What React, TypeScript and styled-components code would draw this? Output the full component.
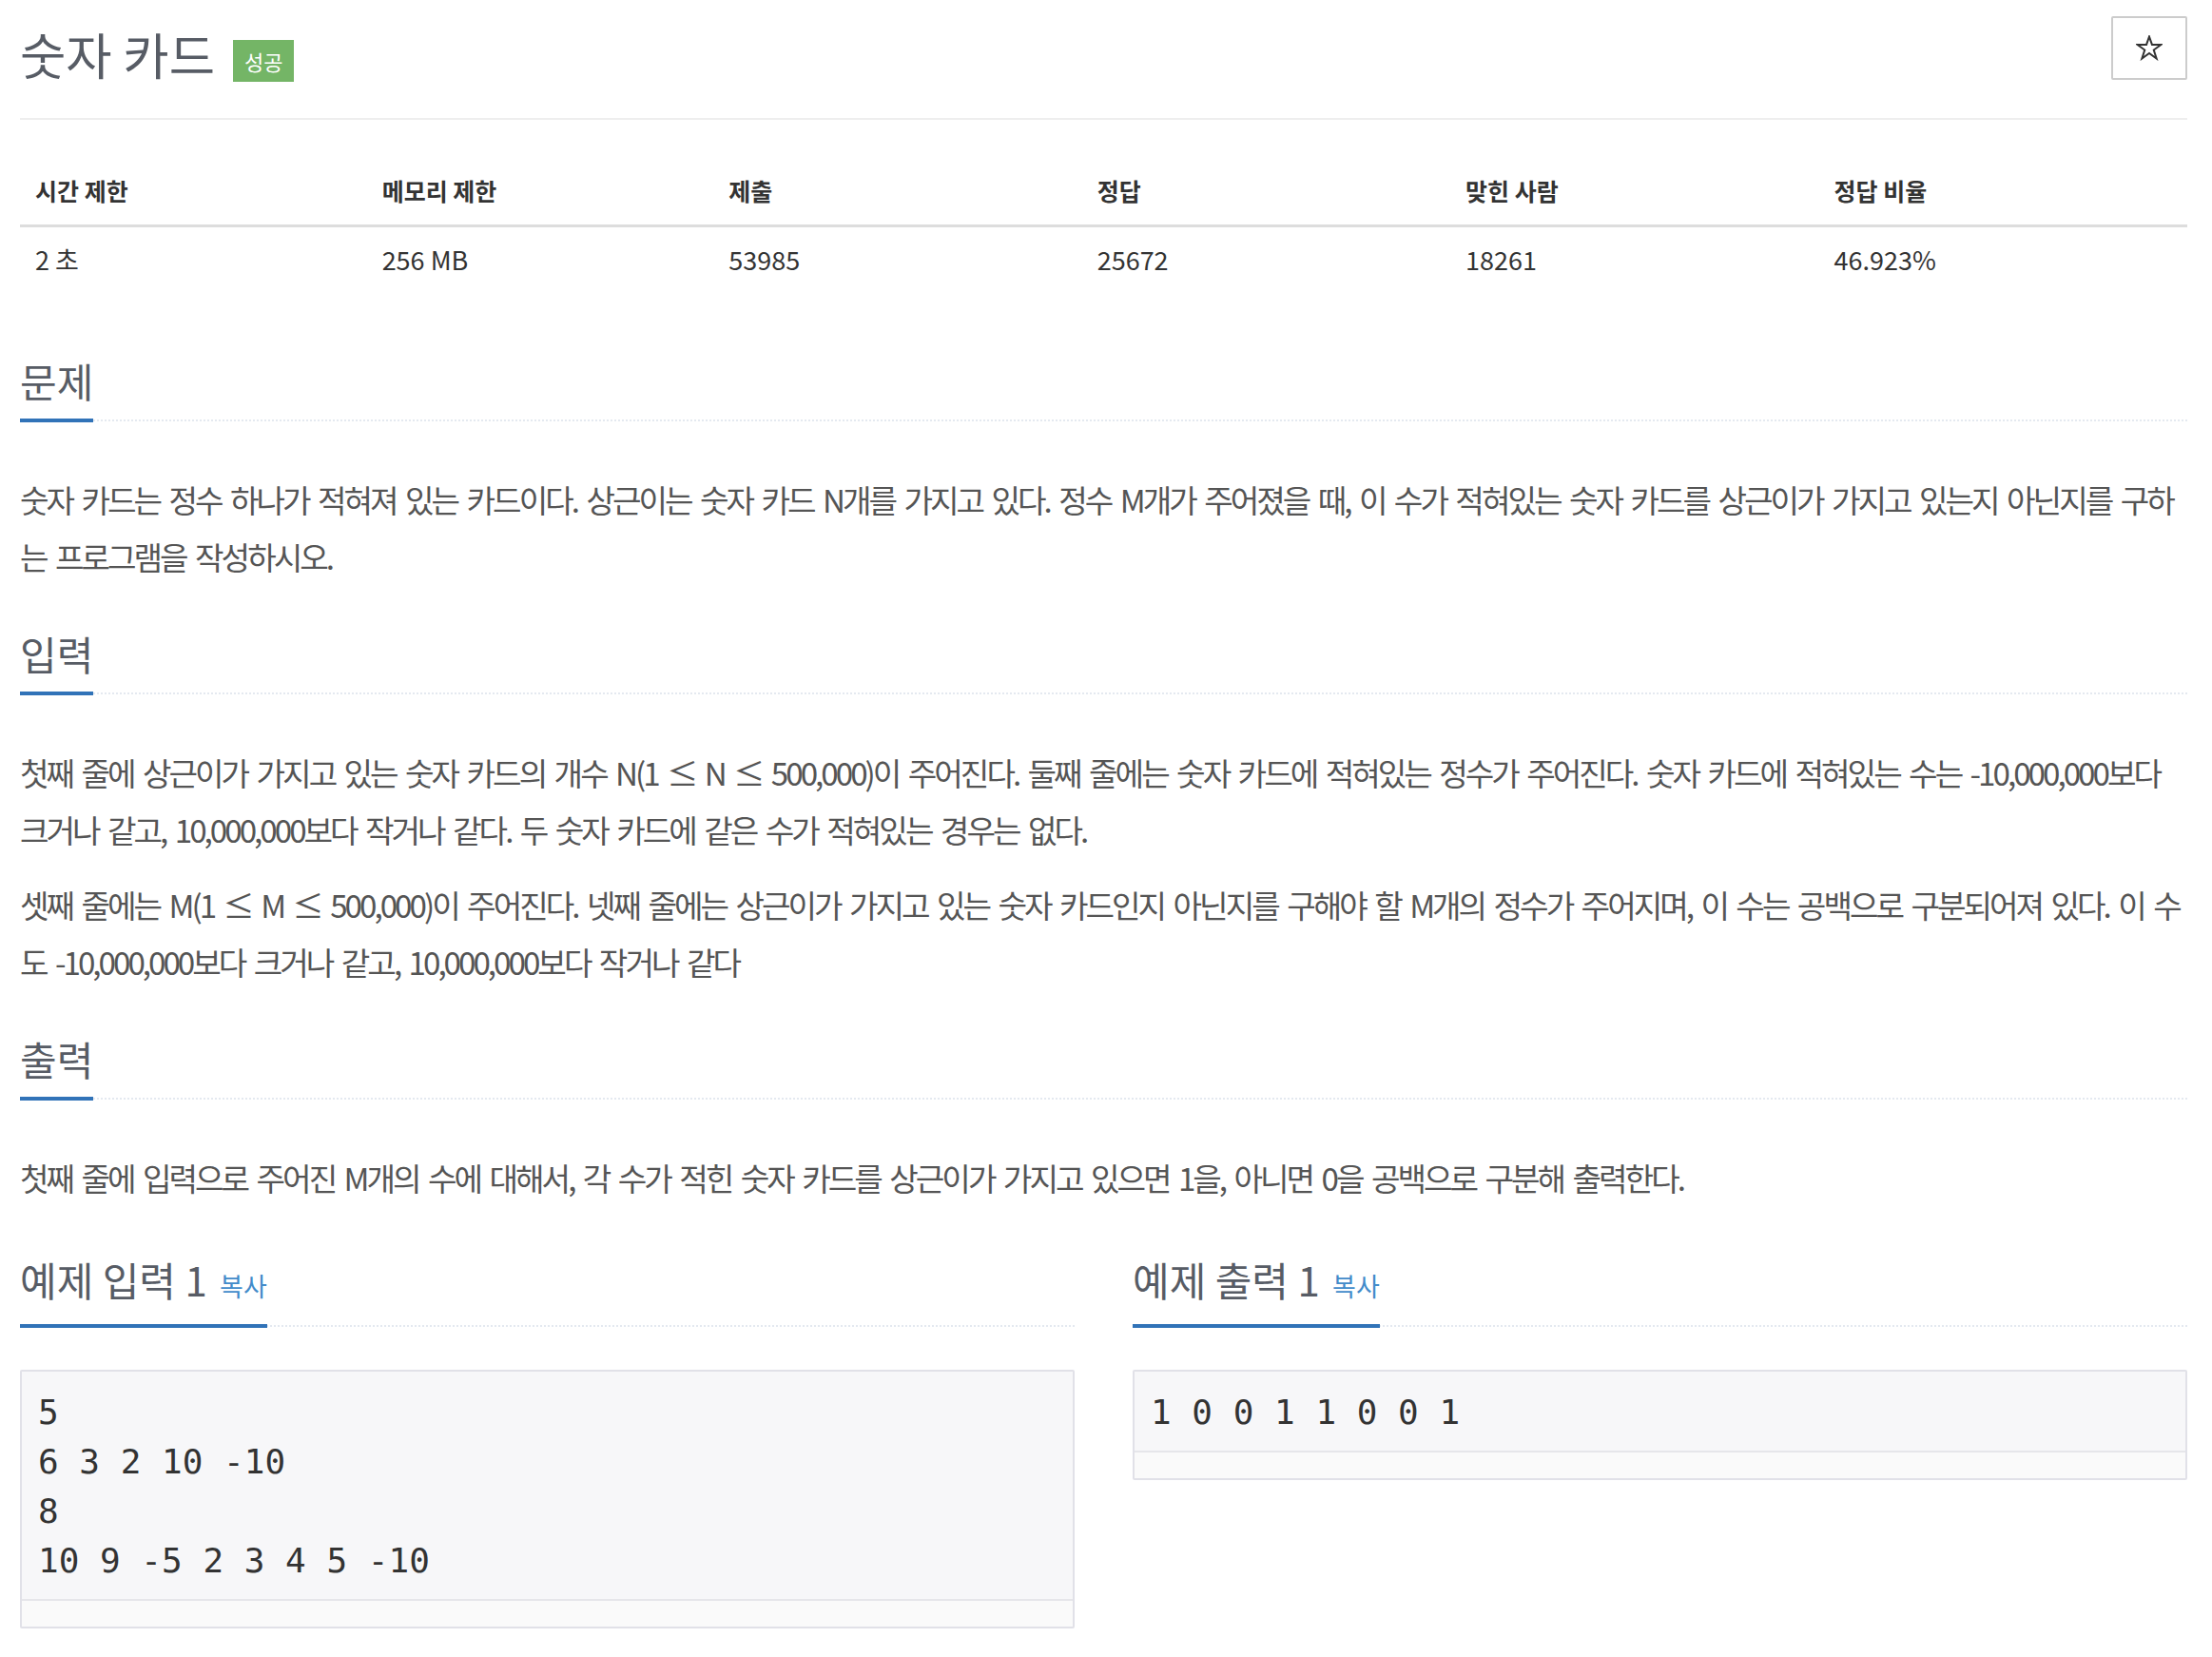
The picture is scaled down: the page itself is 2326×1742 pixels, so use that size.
import React from 'react';
import styled, { createGlobalStyle } from 'styled-components';

const GlobalStyle = createGlobalStyle`
  body {
    margin: 0;
    background: #fff;
    font-family: 'Noto Sans CJK KR', 'Noto Sans', sans-serif;
    color: #333;
  }
`;

const Page = styled.div`
  width: 2279px;
  margin-left: 21px;
  padding-bottom: 40px;
`;

const PageHeader = styled.div`
  display: flex;
  justify-content: space-between;
  align-items: flex-start;
  padding: 17px 0 35px;
  border-bottom: 2px solid #eee;
`;

const TitleGroup = styled.div`
  display: flex;
  align-items: flex-end;
  margin-top: 6px;
`;

const Title = styled.h1`
  margin: 0;
  font-size: 52.5px;
  line-height: 66px;
  font-weight: 400;
  color: #575c65;
`;

const ResultLabel = styled.span`
  margin: 0 0 3px 19px;
  padding: 0 12px;
  height: 44px;
  line-height: 44px;
  font-size: 22px;
  color: #fff;
  background: #74b566;
`;

const StarButton = styled.button`
  display: flex;
  align-items: center;
  justify-content: center;
  width: 80px;
  height: 67px;
  padding: 0;
  background: #fff;
  border: 2px solid #ccc;
  border-radius: 2px;
`;

const InfoTable = styled.table`
  width: 100%;
  margin: 38px 0 59px;
  border-collapse: collapse;
`;

const Th = styled.th<{ width: number }>`
  width: ${({ width }) => width}%;
  padding: 16px;
  text-align: left;
  font-size: 25px;
  line-height: 40px;
  font-weight: 700;
  color: #333;
  border-bottom: 3px solid #ddd;
`;

const Td = styled.td`
  padding: 14px 16px 18px;
  font-size: 27px;
  line-height: 40px;
  color: #333;
`;

const Headline = styled.div<{ top?: number; bottom?: number }>`
  margin: ${({ top }) => top ?? 43}px 0 ${({ bottom }) => bottom ?? 52}px;
  border-bottom: 2px dotted #e4e9f0;
`;

const HeadlineTitle = styled.h2`
  display: inline-block;
  margin: 0 0 -3px;
  padding-bottom: 10px;
  border-bottom: 4px solid #3173b8;
  font-size: 42px;
  line-height: 60px;
  font-weight: 400;
  color: #575c65;
`;

const CopyButton = styled.span`
  margin-left: 4px;
  font-size: 27px;
  color: #428bca;
  cursor: pointer;
`;

const Paragraph = styled.p`
  margin: 0 0 20px;
  font-size: 33.2px;
  letter-spacing: -3px;
  word-spacing: 5px;
  line-height: 59.5px;
  color: #555;
`;

const SampleRow = styled.div`
  display: grid;
  grid-template-columns: 1fr 1fr;
  column-gap: 61px;
  margin-top: 47px;
`;

const SampleBox = styled.div`
  border: 2px solid #e1e1e8;
  border-radius: 2px;
  background: #f7f7f9;
`;

const SamplePre = styled.pre`
  margin: 0;
  padding: 17px 17px 14px;
  font-family: 'DejaVu Sans Mono', 'Liberation Mono', monospace;
  font-size: 36px;
  line-height: 52px;
  color: #333;
`;

const ScrollTrack = styled.div`
  height: 27px;
  border-top: 2px solid #e6e6ea;
  background: #fafafa;
`;

const columns = [
  { label: '시간 제한', value: '2 초', width: 16 },
  { label: '메모리 제한', value: '256 MB', width: 16 },
  { label: '제출', value: '53985', width: 17 },
  { label: '정답', value: '25672', width: 17 },
  { label: '맞힌 사람', value: '18261', width: 17 },
  { label: '정답 비율', value: '46.923%', width: 17 },
];

function StarIcon() {
  return (
    <svg width="28" height="27" viewBox="0 0 28 27">
      <polygon
        points="14,1.5 16.94,9.95 26.36,9.98 18.75,15.55 21.64,24.52 14,19 6.36,24.52 9.25,15.55 1.64,9.98 11.06,9.95"
        fill="none"
        stroke="#333"
        strokeWidth="2"
      />
    </svg>
  );
}

function Sample({ title, data }: { title: string; data: string }) {
  return (
    <div>
      <Headline top={0} bottom={45}>
        <HeadlineTitle>
          {title} <CopyButton>복사</CopyButton>
        </HeadlineTitle>
      </Headline>
      <SampleBox>
        <SamplePre>{data}</SamplePre>
        <ScrollTrack />
      </SampleBox>
    </div>
  );
}

export default function App(): JSX.Element {
  return (
    <Page>
      <GlobalStyle />
      <PageHeader>
        <TitleGroup>
          <Title>숫자 카드</Title>
          <ResultLabel>성공</ResultLabel>
        </TitleGroup>
        <StarButton aria-label="star">
          <StarIcon />
        </StarButton>
      </PageHeader>

      <InfoTable>
        <thead>
          <tr>
            {columns.map((col) => (
              <Th key={col.label} width={col.width}>
                {col.label}
              </Th>
            ))}
          </tr>
        </thead>
        <tbody>
          <tr>
            {columns.map((col) => (
              <Td key={col.label}>{col.value}</Td>
            ))}
          </tr>
        </tbody>
      </InfoTable>

      <section>
        <Headline top={0}>
          <HeadlineTitle>문제</HeadlineTitle>
        </Headline>
        <Paragraph>
          숫자 카드는 정수 하나가 적혀져 있는 카드이다. 상근이는 숫자 카드 N개를 가지고 있다. 정수 M개가 주어졌을 때, 이
          수가 적혀있는 숫자 카드를 상근이가 가지고 있는지 아닌지를 구하는 프로그램을 작성하시오.
        </Paragraph>
      </section>

      <section>
        <Headline>
          <HeadlineTitle>입력</HeadlineTitle>
        </Headline>
        <Paragraph>
          첫째 줄에 상근이가 가지고 있는 숫자 카드의 개수 N(1 ≤ N ≤ 500,000)이 주어진다. 둘째 줄에는 숫자 카드에
          적혀있는 정수가 주어진다. 숫자 카드에 적혀있는 수는 -10,000,000보다 크거나 같고, 10,000,000보다 작거나 같다. 두
          숫자 카드에 같은 수가 적혀있는 경우는 없다.
        </Paragraph>
        <Paragraph>
          셋째 줄에는 M(1 ≤ M ≤ 500,000)이 주어진다. 넷째 줄에는 상근이가 가지고 있는 숫자 카드인지 아닌지를 구해야 할
          M개의 정수가 주어지며, 이 수는 공백으로 구분되어져 있다. 이 수도 -10,000,000보다 크거나 같고, 10,000,000보다
          작거나 같다
        </Paragraph>
      </section>

      <section>
        <Headline>
          <HeadlineTitle>출력</HeadlineTitle>
        </Headline>
        <Paragraph>
          첫째 줄에 입력으로 주어진 M개의 수에 대해서, 각 수가 적힌 숫자 카드를 상근이가 가지고 있으면 1을, 아니면 0을
          공백으로 구분해 출력한다.
        </Paragraph>
      </section>

      <SampleRow>
        <Sample title="예제 입력 1" data={'5\n6 3 2 10 -10\n8\n10 9 -5 2 3 4 5 -10'} />
        <Sample title="예제 출력 1" data="1 0 0 1 1 0 0 1" />
      </SampleRow>
    </Page>
  );
}
